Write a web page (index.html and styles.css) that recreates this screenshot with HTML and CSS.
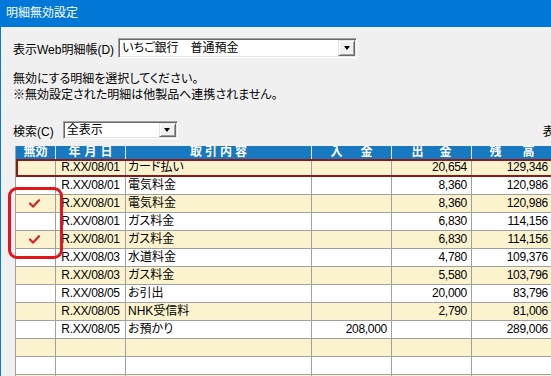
FILE: index.html
```html
<!DOCTYPE html>
<html lang="ja">
<head>
    <meta charset="UTF-8">
    <meta name="viewport" content="width=device-width, initial-scale=1.0">
    <title>明細無効設定</title>
    <link rel="stylesheet" href="styles.css">
</head>
<body>
    <div class="window">
        <div class="titlebar">明細無効設定</div>
        <div class="content">
            <div class="field">
                <label class="label">表示Web明細帳(D)</label>
                <div class="combo combo-account">
                    <span class="combo-text">いちご銀行　普通預金</span>
                    <span class="combo-button"><span class="arrow"></span></span>
                </div>
            </div>

            <p class="notice">無効にする明細を選択してください。<br>※無効設定された明細は他製品へ連携されません。</p>

            <div class="field search">
                <label class="label">検索(C)</label>
                <div class="combo combo-filter">
                    <span class="combo-text">全表示</span>
                    <span class="combo-button"><span class="arrow"></span></span>
                </div>
                <span class="count">表示件数：10件</span>
            </div>

            <div class="grid">
                <div class="row head">
                    <div class="cell">無効</div>
                    <div class="cell spread h-date"><span>年</span><span>月</span><span>日</span></div>
                    <div class="cell spread h-desc"><span>取</span><span>引</span><span>内</span><span>容</span></div>
                    <div class="cell spread h-in"><span>入</span><span>金</span></div>
                    <div class="cell spread h-out"><span>出</span><span>金</span></div>
                    <div class="cell spread h-bal"><span>残</span><span>高</span></div>
                </div>
                <div class="row alt selected">
                    <div class="cell"></div>
                    <div class="cell date">R.XX/08/01</div>
                    <div class="cell desc">カード払い</div>
                    <div class="cell num"></div>
                    <div class="cell num">20,654</div>
                    <div class="cell num">129,346</div>
                </div>
                <div class="row">
                    <div class="cell"></div>
                    <div class="cell date">R.XX/08/01</div>
                    <div class="cell desc">電気料金</div>
                    <div class="cell num"></div>
                    <div class="cell num">8,360</div>
                    <div class="cell num">120,986</div>
                </div>
                <div class="row alt">
                    <div class="cell check"><svg width="11" height="9" viewBox="0 0 11 9"><path d="M1 4.5 L4.2 7.6 L10 1.2" fill="none" stroke="#d42428" stroke-width="2.2" stroke-linecap="round" stroke-linejoin="round"/></svg></div>
                    <div class="cell date">R.XX/08/01</div>
                    <div class="cell desc">電気料金</div>
                    <div class="cell num"></div>
                    <div class="cell num">8,360</div>
                    <div class="cell num">120,986</div>
                </div>
                <div class="row">
                    <div class="cell"></div>
                    <div class="cell date">R.XX/08/01</div>
                    <div class="cell desc">ガス料金</div>
                    <div class="cell num"></div>
                    <div class="cell num">6,830</div>
                    <div class="cell num">114,156</div>
                </div>
                <div class="row alt">
                    <div class="cell check"><svg width="11" height="9" viewBox="0 0 11 9"><path d="M1 4.5 L4.2 7.6 L10 1.2" fill="none" stroke="#d42428" stroke-width="2.2" stroke-linecap="round" stroke-linejoin="round"/></svg></div>
                    <div class="cell date">R.XX/08/01</div>
                    <div class="cell desc">ガス料金</div>
                    <div class="cell num"></div>
                    <div class="cell num">6,830</div>
                    <div class="cell num">114,156</div>
                </div>
                <div class="row">
                    <div class="cell"></div>
                    <div class="cell date">R.XX/08/03</div>
                    <div class="cell desc">水道料金</div>
                    <div class="cell num"></div>
                    <div class="cell num">4,780</div>
                    <div class="cell num">109,376</div>
                </div>
                <div class="row alt">
                    <div class="cell"></div>
                    <div class="cell date">R.XX/08/03</div>
                    <div class="cell desc">ガス料金</div>
                    <div class="cell num"></div>
                    <div class="cell num">5,580</div>
                    <div class="cell num">103,796</div>
                </div>
                <div class="row">
                    <div class="cell"></div>
                    <div class="cell date">R.XX/08/05</div>
                    <div class="cell desc">お引出</div>
                    <div class="cell num"></div>
                    <div class="cell num">20,000</div>
                    <div class="cell num">83,796</div>
                </div>
                <div class="row alt">
                    <div class="cell"></div>
                    <div class="cell date">R.XX/08/05</div>
                    <div class="cell desc">NHK受信料</div>
                    <div class="cell num"></div>
                    <div class="cell num">2,790</div>
                    <div class="cell num">81,006</div>
                </div>
                <div class="row">
                    <div class="cell"></div>
                    <div class="cell date">R.XX/08/05</div>
                    <div class="cell desc">お預かり</div>
                    <div class="cell num">208,000</div>
                    <div class="cell num"></div>
                    <div class="cell num">289,006</div>
                </div>
                <div class="row alt">
                    <div class="cell"></div><div class="cell"></div><div class="cell"></div>
                    <div class="cell"></div><div class="cell"></div><div class="cell"></div>
                </div>
                <div class="row">
                    <div class="cell"></div><div class="cell"></div><div class="cell"></div>
                    <div class="cell"></div><div class="cell"></div><div class="cell"></div>
                </div>
                <div class="row alt">
                    <div class="cell"></div><div class="cell"></div><div class="cell"></div>
                    <div class="cell"></div><div class="cell"></div><div class="cell"></div>
                </div>

                <!-- red frame drawn around the checked rows -->
                <div class="highlight"></div>
            </div>
        </div>
    </div>
</body>
</html>
```

FILE: styles.css
```css
* {
    box-sizing: border-box;
}

body {
    margin: 0;
    height: 376px;
    overflow: hidden;
    background: #f0f0f0;
    font-family: "Liberation Sans", "Noto Sans CJK JP", sans-serif;
    font-size: 12px;
    color: #000;
    font-feature-settings: "palt";
}

.window {
    height: 376px;
    border-left: 1px solid #0078d7;
}

.titlebar {
    height: 27px;
    line-height: 27px;
    padding-left: 5px;
    background: #0078d7;
    color: #fff;
}

.content {
    padding: 11px 0 0 12px;
}

.field {
    display: flex;
    align-items: center;
    white-space: nowrap;
}

.label {
    margin-right: 4px;
}

/* classic sunken combo box */
.combo {
    display: flex;
    flex: none;
    height: 20px;
    background: #fff;
    border: 1px solid;
    border-color: #a0a0a0 #fff #fff #a0a0a0;
    box-shadow: inset 1px 1px 0 #696969, inset -1px -1px 0 #e3e3e3;
}

.combo-account {
    width: 239px;
}

.combo-filter {
    width: 115px;
    height: 18px;
}

.combo-text {
    flex: 1;
    padding-left: 3px;
    line-height: 18px;
}

.combo-filter .combo-text {
    line-height: 16px;
}

.combo-button {
    display: flex;
    align-items: center;
    justify-content: center;
    width: 17px;
    margin: 1px;
    background: #f0f0f0;
    border: 1px solid;
    border-color: #e3e3e3 #696969 #696969 #e3e3e3;
    box-shadow: inset 1px 1px 0 #fff, inset -1px -1px 0 #a0a0a0;
}

.arrow {
    width: 0;
    height: 0;
    border-left: 3.5px solid transparent;
    border-right: 3.5px solid transparent;
    border-top: 4px solid #000;
}

.notice {
    margin: 13px 0 0;
    line-height: 16px;
}

.search {
    margin-top: 18px;
}

.search .label {
    margin-right: 9px;
}

.count {
    margin-left: 365px;
}

/* statement grid */
.grid {
    position: relative;
    width: 560px;
    margin: 7px 0 0 2px;
    border-left: 1px solid #a0a0a0;
}

.row {
    display: grid;
    grid-template-columns: 40px 70px 186px 80px 80px 81px;
    height: 18px;
    background: #fff;
    border-bottom: 1px solid #a0a0a0;
}

.row.alt {
    background: #fbf3cd;
}

.row.selected {
    outline: 2px solid #8b1a1a;
    outline-offset: -2px;
}

.cell {
    padding: 0 3px;
    line-height: 17px;
    white-space: nowrap;
    overflow: hidden;
    border-right: 1px solid #a0a0a0;
}

.head {
    height: 13px;
    background: #1878c0;
    color: #fff;
    border-bottom: 0;
}

.head .cell {
    padding: 0;
    line-height: 13px;
    text-align: center;
    font-weight: bold;
    border-right-color: #dce8f4;
}

/* header captions with their characters spread apart */
.spread {
    display: flex;
    justify-content: center;
}

.h-date {
    gap: 4px;
}

.h-desc {
    gap: 3px;
}

.h-in {
    gap: 18px;
}

.h-out {
    gap: 16px;
}

.h-bal {
    gap: 21px;
}

.date {
    text-align: center;
    letter-spacing: -0.3px;
}

.desc {
    padding-left: 2px;
}

.num {
    text-align: right;
    padding-right: 4px;
    letter-spacing: -0.3px;
}

.check {
    display: flex;
    align-items: center;
    justify-content: center;
    padding-right: 6px;
}

.highlight {
    position: absolute;
    left: -8px;
    top: 41px;
    width: 55px;
    height: 72px;
    border: 3px solid #e3141b;
    border-radius: 9px;
}
```
